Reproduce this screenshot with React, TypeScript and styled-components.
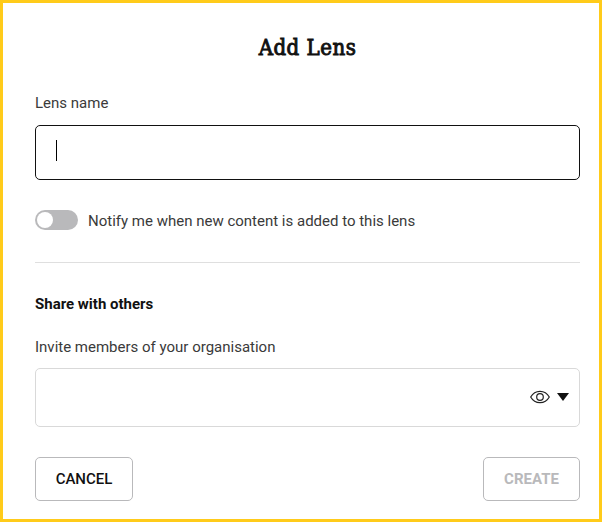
import React from "react";
import styled, { createGlobalStyle } from "styled-components";

const GlobalStyle = createGlobalStyle`
  *, *::before, *::after { box-sizing: border-box; }
  body { margin: 0; background: #fff; font-family: Roboto, "Liberation Sans", sans-serif; }
`;

const Dialog = styled.form`
  display: flex;
  flex-direction: column;
  width: 602px;
  height: 522px;
  padding: 31px 19px 18px 32px;
  border: 3px solid #ffcb1a;
  background: #fff;
  color: #111;
`;

const Title = styled.h1`
  margin: 0 0 31px;
  font: 400 22px/28px "Roboto Slab", "DejaVu Serif Condensed", "DejaVu Serif", serif;
  font-stretch: condensed;
  letter-spacing: 0.5px;
  -webkit-text-stroke: 0.9px #111;
  text-align: center;
`;

const Label = styled.label`
  height: 20px;
  font-size: 15px;
  line-height: 20px;
  color: #3a3a3a;
  white-space: nowrap;
`;

const NotifyLabel = styled(Label)`
  height: 22px;
  line-height: 24px;
`;

const NameField = styled.div`
  display: flex;
  align-items: center;
  height: 55px;
  margin-top: 12px;
  padding: 0 20px 4px;
  border: 1px solid #111;
  border-radius: 5px;
`;

const Caret = styled.span`
  width: 1px;
  height: 21px;
  background: #000;
`;

const NotifyRow = styled.div`
  display: flex;
  align-items: center;
  gap: 10px;
  height: 20px;
  margin-top: 30px;
`;

const Toggle = styled.span`
  display: flex;
  align-items: center;
  width: 43px;
  height: 20px;
  padding: 0 2px;
  border-radius: 10px;
  background: #b9b9bb;
`;

const Knob = styled.span`
  width: 16px;
  height: 16px;
  border-radius: 50%;
  background: #fff;
`;

const Divider = styled.hr`
  width: 100%;
  height: 1px;
  margin: 32px 0 31px;
  border: 0;
  background: #dfdfdf;
`;

const SectionTitle = styled.h2`
  margin: 0 0 23px;
  font-size: 15px;
  font-weight: 700;
  line-height: 20px;
`;

const MemberSelect = styled.div`
  display: flex;
  align-items: center;
  justify-content: flex-end;
  gap: 7px;
  height: 59px;
  margin-top: 11px;
  padding: 0 10px 2px 0;
  border: 1px solid #d9d9d9;
  border-radius: 5px;
`;

const Actions = styled.div`
  display: flex;
  justify-content: space-between;
  margin-top: 30px;
`;

const Button = styled.button<{ $muted?: boolean }>`
  width: ${({ $muted }) => ($muted ? 97 : 98)}px;
  height: 44px;
  padding: 0;
  border: 1px solid #b9b9bb;
  border-radius: 5px;
  background: #fff;
  color: ${({ $muted }) => ($muted ? "#b9b9bb" : "#111")};
  font: ${({ $muted }) => ($muted ? 700 : 500)} 15px/20px Roboto, sans-serif;
`;

const EyeIcon = () => (
  <svg width="20" height="14" viewBox="0 0 20 14" fill="none" stroke="#222" strokeWidth="1.2">
    <path d="M.7 7C2.9 3.1 6.1 1.3 10 1.3S17.1 3.1 19.3 7C17.1 10.9 13.9 12.7 10 12.7S2.9 10.9.7 7Z" />
    <circle cx="10" cy="7" r="3.3" />
  </svg>
);

const ArrowIcon = () => (
  <svg width="12" height="8" viewBox="0 0 12 8">
    <path d="M0 0h12L6 8Z" fill="#111" />
  </svg>
);

export default function App() {
  return (
    <>
      <GlobalStyle />
      <Dialog>
        <Title>Add Lens</Title>
        <Label>Lens name</Label>
        <NameField><Caret /></NameField>
        <NotifyRow>
          <Toggle><Knob /></Toggle>
          <NotifyLabel>Notify me when new content is added to this lens</NotifyLabel>
        </NotifyRow>
        <Divider />
        <SectionTitle>Share with others</SectionTitle>
        <Label>Invite members of your organisation</Label>
        <MemberSelect><EyeIcon /><ArrowIcon /></MemberSelect>
        <Actions>
          <Button type="button">CANCEL</Button>
          <Button type="button" $muted disabled>CREATE</Button>
        </Actions>
      </Dialog>
    </>
  );
}
